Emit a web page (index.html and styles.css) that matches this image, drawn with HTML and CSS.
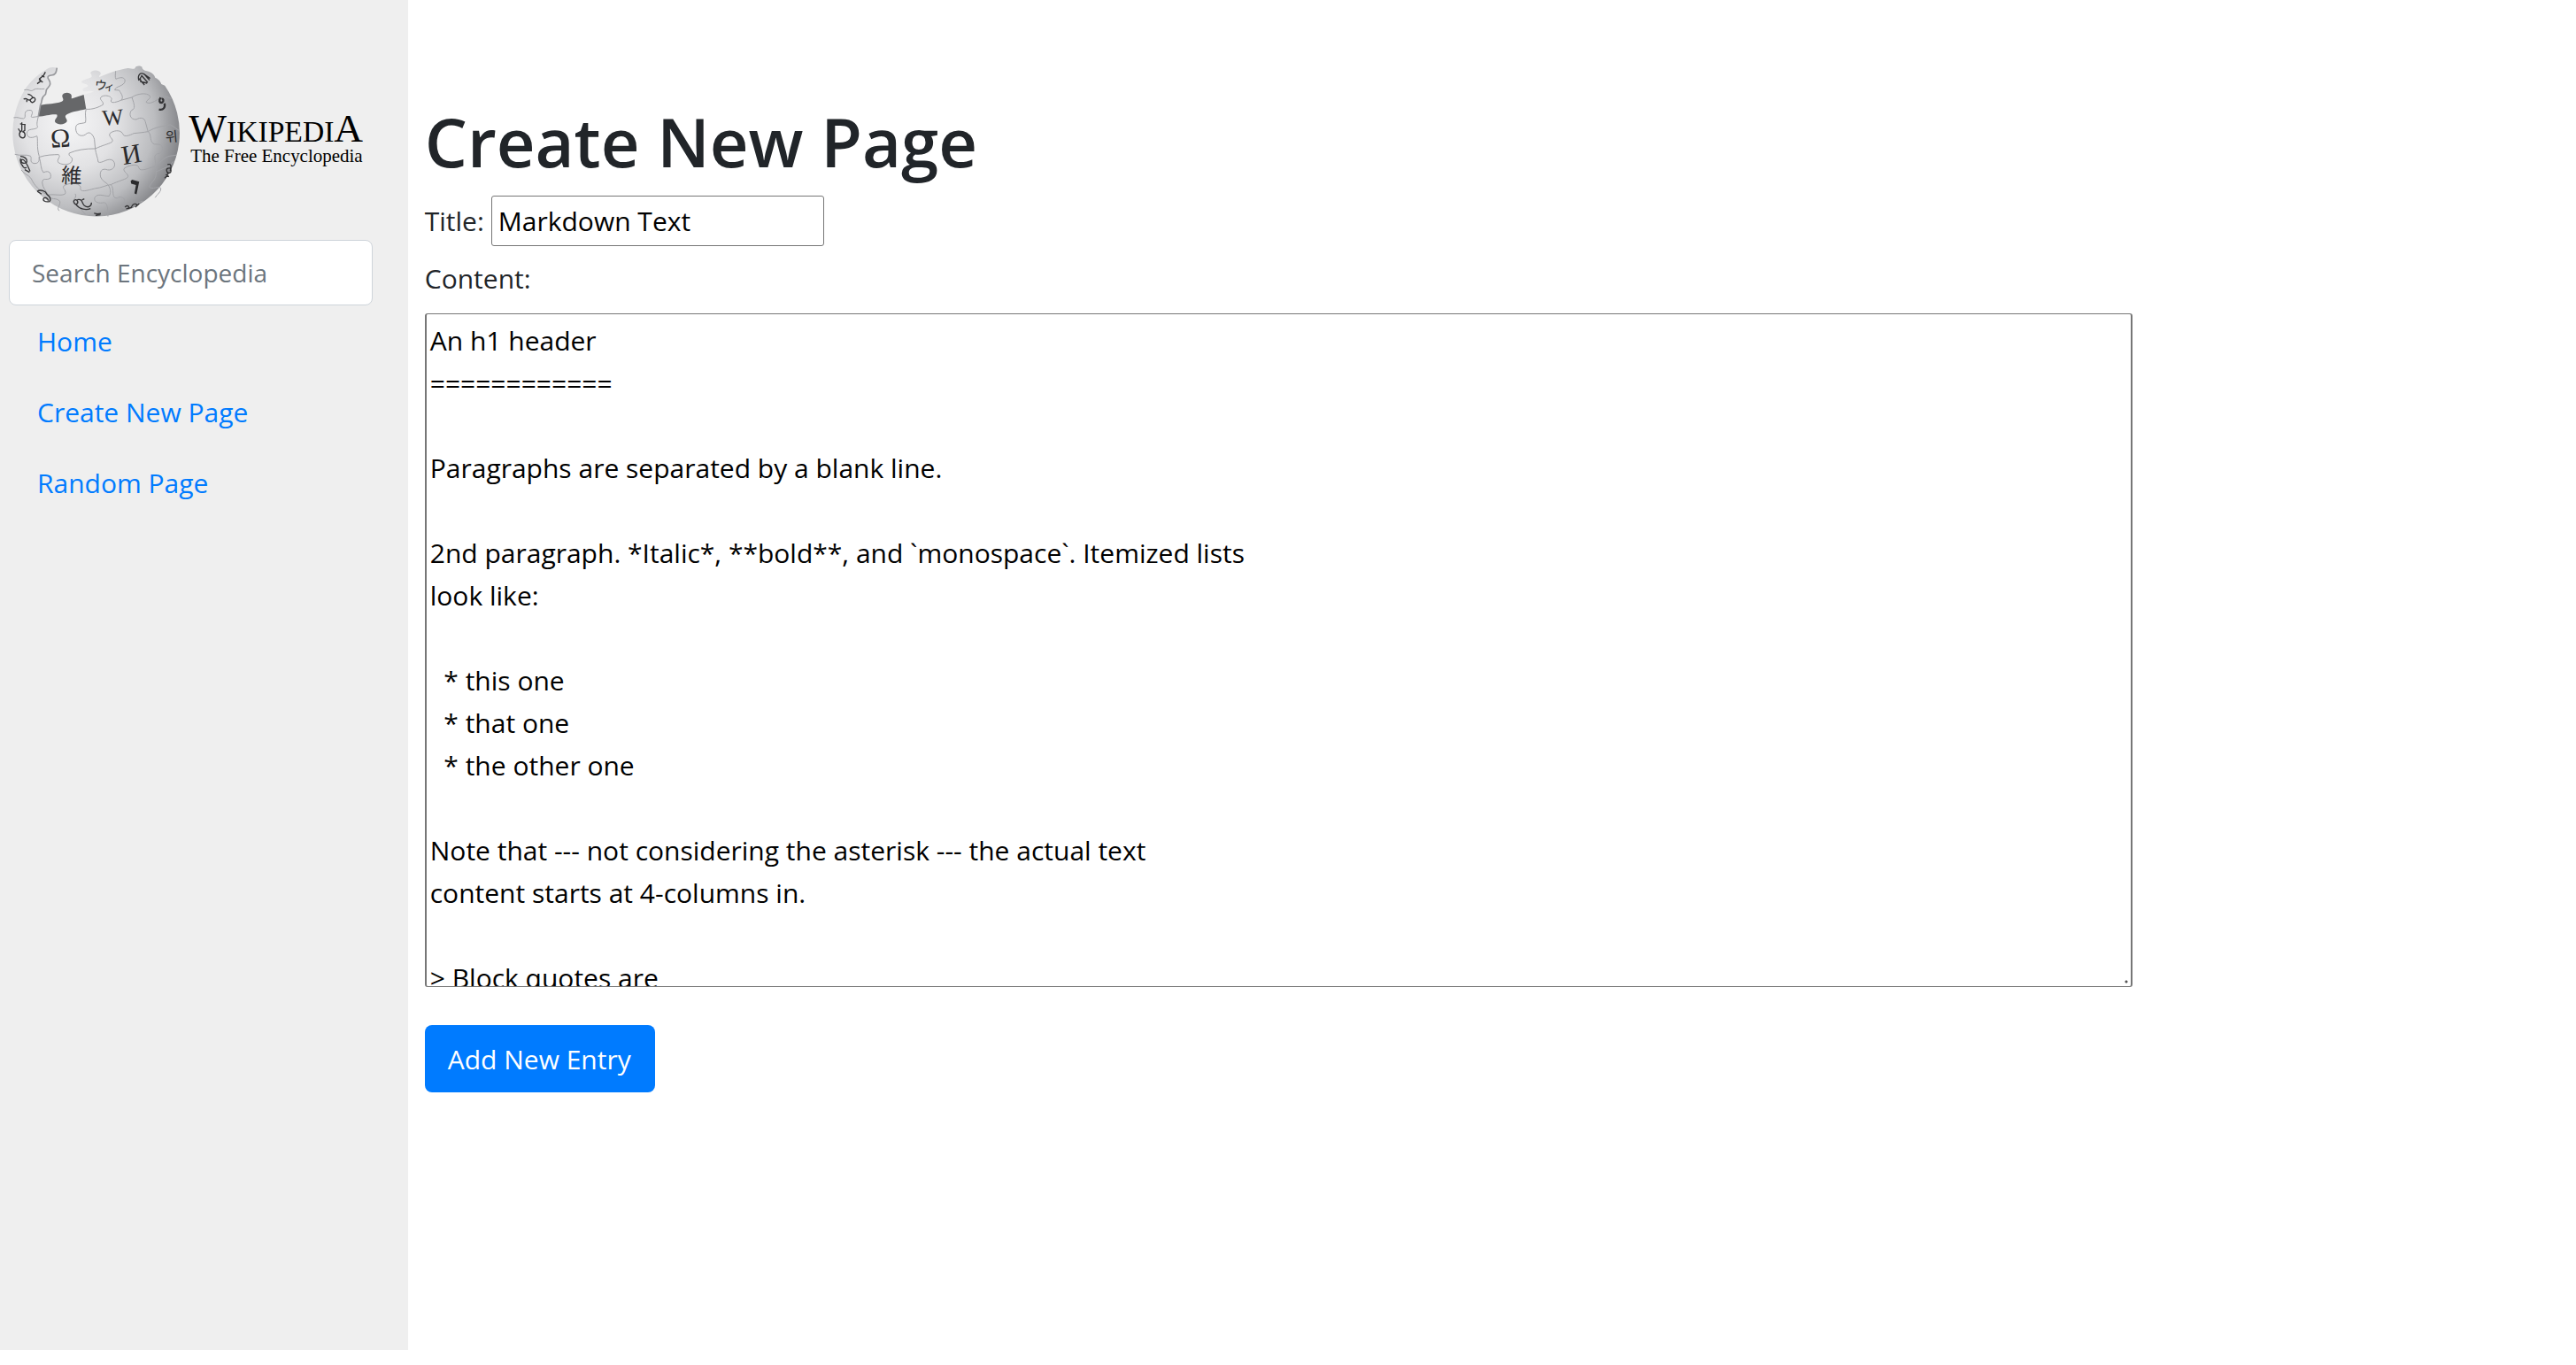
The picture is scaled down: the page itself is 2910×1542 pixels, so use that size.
FILE: index.html
```html
<!DOCTYPE html>
<html lang="en">
<head>
<meta charset="utf-8">
<title>Create New Page</title>
<link rel="stylesheet" href="styles.css">
</head>
<body>
<div class="layout">
  <aside class="sidebar">
    <svg class="logo" viewBox="30 0 1233 600" role="img" aria-label="Wikipedia, The Free Encyclopedia">
      <defs>
        <radialGradient id="ball" gradientUnits="userSpaceOnUse" cx="235" cy="235" r="400">
          <stop offset="0" stop-color="#f6f6f7"/>
          <stop offset=".4" stop-color="#e2e2e4"/>
          <stop offset=".72" stop-color="#bcbdc0"/>
          <stop offset="1" stop-color="#77787c"/>
        </radialGradient>
      </defs>
      <!-- globe body -->
      <path fill="url(#ball)" d="M193 50C191 66 188 75 174 75C160 76 160 83 166 91C173 101 170 111 162 118C151 126 161 136 151 143C137 152 145 165 137 176L130 215L292 190L285 140L318 131C302 124 293 134 282 128C276 120 287 117 297 113C302 104 285 106 275 98C285 87 297 89 309 82C316 76 302 69 309 63C321 56 336 58 341 67C344 74 333 77 337 81C365 69 402 56 433 51C445 50 453 58 458 50C460 42 476 42 482 47C480 53 488 59 498 61C514 64 524 74 526 83C534 86 545 95 547 105L559 110A283 283 0 1 1 89 116C107 94 126 75 145 64C160 55 166 44 193 50Z"/>
      <!-- missing piece -->
      <path fill="#666769" d="M137 176C160 170 188 173 209 164C222 158 207 151 212 141C219 131 238 132 242 142C245 153 238 156 247 153L284 141L292 190C265 196 246 198 228 207C213 215 230 222 227 232C221 243 196 245 187 234C182 224 198 220 193 209C184 204 153 213 130 215Z"/>
      <path fill="none" stroke="#97989c" stroke-width="5" d="M193 50C191 66 188 75 174 75C160 76 160 83 166 91C173 101 170 111 162 118C151 126 161 136 151 143C137 152 145 165 137 176L130 215"/>
      <!-- seams between the pieces -->
      <g class="seams">
        <path d="M82 125C98 121 103 132 113 125C125 117 133 124 151 121"/>
        <path d="M46 219C62 215 68 223 80 222C91 218 78 202 92 195C109 190 113 198 107 211C102 222 114 216 130 215C125 234 124 244 128 251C119 263 93 252 91 272C92 292 114 287 125 281C130 289 123 320 133 350"/>
        <path d="M50 343C70 350 88 342 103 349C110 357 98 369 114 374C132 376 134 364 132 353C158 344 180 345 198 344C210 351 188 362 199 372C216 382 244 379 245 361C245 350 230 350 235 339C260 328 289 324 323 324"/>
        <path d="M292 190C286 207 293 219 290 235C276 241 257 235 257 254C256 277 275 286 290 276C303 262 315 275 320 292L323 324C325 343 332 355 333 369C345 377 367 351 384 365C397 382 382 399 365 396C344 388 337 403 341 420C346 434 359 437 367 447C377 464 376 474 370 485C350 485 331 474 321 490C317 508 338 510 352 507C366 507 365 530 366 554"/>
        <path d="M292 190C313 192 334 184 349 175C354 163 331 157 345 147C359 140 382 147 378 158C371 171 389 169 410 160C422 151 410 136 404 126L389 125C391 112 422 113 424 94C422 77 402 84 393 88C389 81 392 70 392 61"/>
        <path d="M410 160L447 150C465 137 498 133 508 145C514 155 495 159 496 167C513 177 532 155 558 146L580 154"/>
        <path d="M447 150C456 173 460 190 447 193C436 204 440 226 462 225C478 216 490 220 493 233L502 266"/>
        <path d="M323 324C349 312 366 309 379 302C390 292 363 283 374 271C393 258 413 263 417 275C421 286 440 279 454 272C476 270 486 269 502 266C529 249 552 249 578 243L608 263"/>
        <path d="M502 266C516 276 505 303 524 309C543 308 553 311 551 329C546 347 529 335 525 350C525 376 534 386 529 403"/>
        <path d="M376 446C405 432 421 430 431 423C444 412 412 402 422 390C444 377 469 375 471 389C475 405 505 389 529 383C543 371 557 353 576 349L598 346"/>
        <path d="M133 353C140 375 137 392 147 405C168 395 175 409 171 424C153 434 148 419 143 438C144 457 156 466 163 481C186 477 210 486 221 477C227 465 205 455 220 448C246 435 276 445 273 457C270 475 297 465 323 459C345 457 360 447 376 446"/>
        <path d="M72 396C90 418 100 411 110 434C121 455 145 475 163 481C175 502 187 487 203 502C206 518 190 525 201 535"/>
        <path d="M255 477C264 491 240 499 251 511C269 520 277 534 291 548M376 446C390 460 375 493 397 492C411 481 429 495 421 507C407 511 407 524 424 526C446 525 459 508 484 502M529 403C533 430 508 440 507 454C516 465 538 449 545 458C548 469 532 480 526 490M529 403C552 390 575 388 588 367"/>
      </g>
      <!-- letters on the pieces -->
      <g class="runes">
        <text x="173" y="321" font-size="90" transform="rotate(-4 173 321)">Ω</text>
        <text x="349" y="246" font-size="76" transform="rotate(-5 349 246)">W</text>
        <text x="418" y="379" font-size="92" transform="rotate(-10 418 379)">И</text>
        <text x="207" y="439" font-size="70" class="cjk" transform="rotate(2 207 439)">維</text>
        <text x="320" y="122" font-size="42" class="cjk" transform="rotate(5 320 122)">ウ</text>
        <text x="352" y="125" font-size="36" class="cjk" transform="rotate(5 352 125)">ィ</text>
        <text x="562" y="302" font-size="46" class="cjk" transform="rotate(-5 562 302)">위</text>
        <path d="M443 434L448 429L472 436L463 479L456 476L461 447L445 443Z"/>
      </g>
      <g class="strokes">
        <path d="M126 104L139 94L134 87L147 77L154 64M132 89L145 99M142 76L151 82"/>
        <path d="M80 156C94 150 94 164 103 158C112 146 123 151 118 162C111 172 103 166 102 159M94 139C101 140 109 144 112 153M91 159L91 166"/>
        <path d="M68 240L87 243M74 235L74 263C62 270 63 286 78 288C88 285 87 268 76 267M84 242L84 262L76 267M62 256L69 268"/>
        <path d="M69 350C82 350 93 358 91 369C79 379 67 369 74 361C84 357 98 391 102 401M76 380C79 391 87 391 90 387M84 395L100 404M70 357C66 367 73 379 78 384"/>
        <path d="M126 469C137 461 155 467 160 480C170 487 174 496 168 503C153 507 141 498 150 491C155 488 163 493 164 500M127 469L141 478"/>
        <path d="M250 501C258 490 268 505 261 511C257 516 250 509 250 501M262 497C281 493 277 509 286 517C300 527 311 518 310 507M258 514C269 530 293 533 307 527M278 498L286 494"/>
        <path d="M424 523C430 514 439 518 436 526C449 527 446 514 454 512C465 510 468 517 459 522L472 510M428 528L448 523"/>
        <path d="M319 543L330 545L342 544M324 550L341 548"/>
        <path d="M558 424C570 418 565 405 573 407C583 405 581 388 573 390C562 390 563 403 571 406M568 378C581 373 582 386 577 399M562 412L573 419"/>
        <path d="M471 93C465 74 477 64 488 71L509 86M475 96L499 102M479 75L501 100M488 70L507 92M471 86L490 108M481 78C472 84 475 94 484 101"/>
        <path stroke-width="7" d="M545 151C538 160 540 169 549 168C558 161 553 154 548 155M558 170C561 184 554 195 539 191"/>
      </g>
      <!-- wordmark -->
      <text class="wordmark" x="640" y="300"><tspan font-size="136">W</tspan><tspan font-size="101">IKIPEDI</tspan><tspan font-size="136">A</tspan></text>
      <text class="wordmark" x="646" y="370" font-size="63">The Free Encyclopedia</text>
    </svg>
    <form class="search">
      <input class="search-box" type="text" name="q" placeholder="Search Encyclopedia" aria-label="Search Encyclopedia">
    </form>
    <nav class="links">
      <a href="#">Home</a>
      <a href="#">Create New Page</a>
      <a href="#">Random Page</a>
    </nav>
  </aside>
  <main class="content">
    <h1>Create New Page</h1>
    <form class="entry">
      <div class="title-row">
        <label for="title">Title:</label>
        <input class="title-box" id="title" type="text" value="Markdown Text">
      </div>
      <label class="content-label" for="body">Content:</label>
      <textarea class="body-box" id="body">An h1 header
============

Paragraphs are separated by a blank line.

2nd paragraph. *Italic*, **bold**, and `monospace`. Itemized lists
look like:

  * this one
  * that one
  * the other one

Note that --- not considering the asterisk --- the actual text
content starts at 4-columns in.

&gt; Block quotes are</textarea>
      <button class="submit" type="button">Add New Entry</button>
    </form>
  </main>
</div>
</body>
</html>
```
FILE: styles.css
```css
* {
  box-sizing: border-box;
}

body {
  margin: 0;
  background: #fff;
  color: #212529;
  font: 30px/48px "Open Sans", "Noto Sans", sans-serif;
}

input,
textarea,
button {
  font: inherit;
}

.layout {
  display: grid;
  grid-template-columns: 19fr 101fr;
  min-height: 100vh;
  padding-bottom: 17px;
}

.sidebar {
  display: flex;
  flex-direction: column;
  padding: 60px 40px 40px 10px;
  background: #efefef;
}

.logo {
  display: block;
  width: 100%;
}

.seams {
  fill: none;
  stroke: #a2a3a7;
  stroke-width: 3;
}

.runes {
  fill: #2b2b2d;
  font-family: "Liberation Serif", serif;
}

.cjk {
  font-family: "Noto Sans CJK JP", "Noto Sans CJK KR", sans-serif;
}

.strokes {
  fill: none;
  stroke: #343436;
  stroke-width: 4;
}

.wordmark {
  fill: #000;
  font-family: "Liberation Serif", serif;
}

.search {
  margin: 11px 0 1px;
}

.search-box {
  display: block;
  width: 100%;
  height: 74px;
  padding: 12px 25px;
  border: 1px solid #ced4da;
  border-radius: 8px;
  background: #fff;
  font-size: 28px;
}

.search-box::placeholder {
  color: #6c757d;
  opacity: 1;
}

.links {
  display: flex;
  flex-direction: column;
}

.links a {
  padding: 16px 32px;
  color: #007bff;
  text-decoration: none;
}

.content {
  padding: 112px 19px 40px;
}

h1 {
  margin: 0 0 13px;
  font-size: 76px;
  font-weight: 600;
  line-height: 96px;
}

.entry {
  display: flex;
  flex-direction: column;
  align-items: flex-start;
}

.title-row {
  display: flex;
  align-items: center;
  gap: 8px;
}

.title-box {
  width: 376px;
  height: 57px;
  padding: 2px 7px;
  border: 1px solid #767676;
  border-radius: 3px;
  color: #000;
}

.content-label {
  margin: 13px 0 15px;
}

.body-box {
  width: 80%;
  height: 761px;
  padding: 6px 4px;
  overflow: hidden;
  border: 2px solid #767676;
  border-width: 1px 2px;
  border-radius: 3px;
  background: radial-gradient(circle at calc(100% - 5px) calc(100% - 5px), #555 1px, transparent 2px) #fff;
  color: #000;
  resize: none;
}

.submit {
  margin-top: 43px;
  padding: 15px 27px 13px 26px;
  border: 0;
  border-radius: 8px;
  background: #007bff;
  color: #fff;
}
```
